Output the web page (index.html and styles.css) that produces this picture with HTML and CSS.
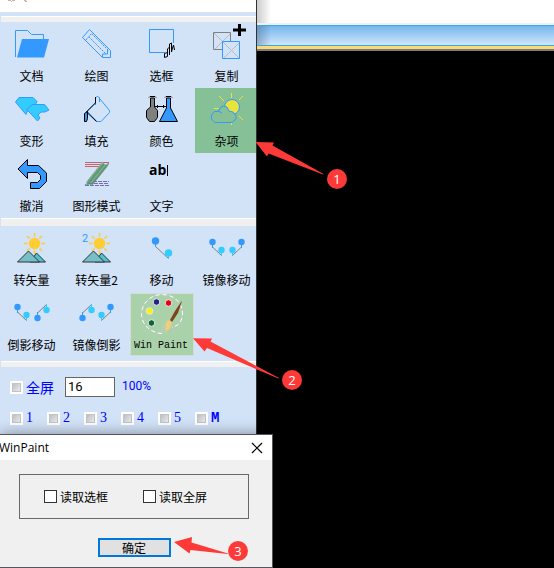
FILE: index.html
```html
<!DOCTYPE html>
<html lang="zh-CN">
<head>
    <meta charset="UTF-8">
    <meta name="viewport" content="width=device-width, initial-scale=1.0">
    <title>WinPaint</title>
    <link rel="stylesheet" href="styles.css">
</head>
<body>

    <!-- Tool panel -->
    <aside class="panel">
        <div class="panel-top">
            <svg width="40" height="4"><path d="M8 .5h3M12 .5h3M24 .5h2" stroke="#b9b4bd"/><path d="M11 1.5h1M25 1.5h2" stroke="#d8a58c"/></svg>
        </div>
        <div class="separator first"></div>

        <div class="tools">
            <button class="tool">
                <svg class="icon"><path d="M15.500 34V7.500h12l4 4h12V17" fill="none" stroke="#39f"/><path d="M22 16h27l-5 18.500H17z" fill="#39f"/></svg>
                <span>文档</span>
            </button>
            <button class="tool">
                <svg class="icon" fill="none" stroke="#39f"><path d="M17.500 14.500l7-8 21 21v7h-8z"/><path d="M21 17l6-7M24 14l17 17M27 11l17 17" stroke-dasharray="2 1"/><path d="M42.500 27v4h-5v3"/></svg>
                <span>绘图</span>
            </button>
            <button class="tool">
                <svg class="icon" fill="none"><path d="M43.500 20V6.500h-24v23H35" stroke="#39f"/><path d="M34.500 34.500v-4l3-1v4l-3 1M37.500 33v-7l2-2v8M39.500 26v-5l2-1v9l1-4 1-3 1 5" stroke="#000"/></svg>
                <span>选框</span>
            </button>
            <button class="tool">
                <svg class="icon" fill="none"><path d="M19 10l17 17M36 10L19 27M28 19l17 17M45 19L28 36" stroke="#bbb"/><path d="M27 26.500h-8.500v-17h17V18" stroke="#808080"/><path d="M27.500 18.500h17v17h-17z" stroke="#39f"/><path d="M38 7h13M44.500 1v12" stroke="#000" stroke-width="3"/></svg>
                <span>复制</span>
            </button>

            <button class="tool">
                <svg class="icon" stroke="#39f"><path d="M15.500 14l3.500-4.500h14l4 4-2 4-8 6-1 3z" fill="#3cf"/><path d="M26.500 21.500l6-5h12l4.500 5.500-4 2h-4l-3 3 2 3-2.500 3-6.500-7z" fill="#3cf"/></svg>
                <span>变形</span>
            </button>
            <button class="tool">
                <svg class="icon" fill="none"><path d="M31 14l-9 9 10 10.500h4l8.500-9v-2L35 11" stroke="#39f"/><path d="M30.500 17V9.500l2-1 2 1V14" stroke="#39f"/><path d="M19.500 33.500v-8l3-2v7l-1 3z" fill="#39f" stroke="#000"/><path d="M30.500 9v6l-9 9 10 9.500" stroke="#000"/></svg>
                <span>填充</span>
            </button>
            <button class="tool">
                <svg class="icon" stroke="#000"><path d="M20.500 10h4v9l3 3.500v7l-3 4h-5l-3-4v-7l4-3.500z" fill="#808080"/><path d="M36.500 10h4v10l7 13.500H29.500l7-13.500z" fill="#39f"/><path d="M19 9.500l1-1h5l1 1M35 9.500l1-1h5l1 1M25 18.500h11M27.500 17v3M33.500 17v3" fill="none"/></svg>
                <span>颜色</span>
            </button>
            <button class="tool misc">
                <svg class="icon"><circle cx="37" cy="19" r="7.500" fill="#ebe33c" stroke="#39f"/><path d="M36.500 5v5M48 8l-4 4M24 8l5 5M48 32l-4-4M19 20.500h5M36.500 35v2" stroke="#ebe33c"/><path d="M20 34.500l-3.500-3.500v-4l3-3.500h4l1.500-3.500 3-2 4 1 2 4 4 1 3 4v3l-4 3.500z" fill="#85c097" stroke="#39f"/><path d="M23 23l4 2" stroke="#39f"/></svg>
                <span>杂项</span>
            </button>

            <button class="tool">
                <svg class="icon"><path d="M18 16l9.500-9.500v6h11l8 7.500v8.500l-7 7h-9v-6h7l3-3v-4l-3-3H27.500v6z" fill="#39f" stroke="#000"/></svg>
                <span>撤消</span>
            </button>
            <button class="tool">
                <svg class="icon" fill="none"><path d="M20 9.500h24M20 11.500h20M20 13.500h16" stroke="#c8606a"/><path d="M40 11L24 31" stroke="#8fb49c" stroke-width="7"/><path d="M39 11L22 32M43 11L27 31" stroke="#4f9f74" stroke-width="2"/><path d="M36 12L20 32M41 12L25 32M44 10L28 30" stroke="#818a80" stroke-dasharray="2 1"/><path d="M28 28.500h16M24 30.500h20M20 32.500h24" stroke="#7770a8" stroke-dasharray="4 1"/></svg>
                <span>图形模式</span>
            </button>
            <button class="tool">
                <svg class="icon"><text class="ab" x="19" y="22">ab</text><path d="M37.500 12v11" stroke="#000"/></svg>
                <span>文字</span>
            </button>
        </div>

        <div class="separator wide"></div>

        <div class="tools vector">
            <button class="tool">
                <svg class="icon"><path d="M34.500 6v21M24 16.500h21M27 9l15 15M42 9L27 24" stroke="#fc3" stroke-width="1.500"/><circle cx="34.500" cy="16.500" r="7" fill="#d2e2f7"/><circle cx="34.500" cy="16.500" r="5.700" fill="#fc3"/><path d="M30 35l6.500-9 9 9z" fill="#4cc3cd" stroke="#333"/><path d="M17.500 35l11-11 11 11z" fill="#76bfc9" stroke="#333"/></svg>
                <span>转矢量</span>
            </button>
            <button class="tool">
                <svg class="icon"><text class="two" x="17" y="15">2</text><path d="M34.500 6v21M24 16.500h21M27 9l15 15M42 9L27 24" stroke="#fc3" stroke-width="1.500"/><circle cx="34.500" cy="16.500" r="7" fill="#d2e2f7"/><circle cx="34.500" cy="16.500" r="5.700" fill="#fc3"/><path d="M30 35l6.500-9 9 9z" fill="#4cc3cd" stroke="#333"/><path d="M17.500 35l11-11 11 11z" fill="#76bfc9" stroke="#333"/></svg>
                <span>转矢量2</span>
            </button>
            <button class="tool">
                <svg class="icon"><path d="M25.500 19.500l13 12" stroke="#808080"/><path d="M25.500 14v6" stroke="#39f"/><path d="M38.500 26v6" stroke="#3cf"/><circle cx="25.500" cy="14" r="3.700" fill="#39f"/><circle cx="38.500" cy="26" r="3.700" fill="#3cf"/></svg>
                <span>移动</span>
            </button>
            <button class="tool">
                <svg class="icon"><path d="M17.500 20l9 8.500M46.500 20l-9 8.500" stroke="#808080"/><path d="M17.500 15v6M46.500 15v6" stroke="#39f"/><path d="M26.500 23v6M37.500 23v6" stroke="#3cf"/><circle cx="17.500" cy="15" r="3.200" fill="#39f"/><circle cx="46.500" cy="15" r="3.200" fill="#39f"/><circle cx="26.500" cy="23" r="3.200" fill="#3cf"/><circle cx="37.500" cy="23" r="3.200" fill="#3cf"/></svg>
                <span>镜像移动</span>
            </button>

            <button class="tool">
                <svg class="icon"><path d="M17.500 20l9 8.500M37.500 21l9-8.500" stroke="#808080"/><path d="M17.500 15v6M37.500 26v-6" stroke="#39f"/><path d="M26.500 23v6M46.500 18v-6" stroke="#3cf"/><circle cx="17.500" cy="15" r="3.200" fill="#39f"/><circle cx="37.500" cy="26" r="3.200" fill="#39f"/><circle cx="26.500" cy="23" r="3.200" fill="#3cf"/><circle cx="46.500" cy="18" r="3.200" fill="#3cf"/></svg>
                <span>倒影移动</span>
            </button>
            <button class="tool">
                <svg class="icon"><path d="M17.500 21l9-8.500M45.500 20l-9 8.500" stroke="#808080"/><path d="M17.500 26v-6M45.500 15v6" stroke="#39f"/><path d="M26.500 18v-6M36.500 23v6" stroke="#3cf"/><circle cx="17.500" cy="26" r="3.200" fill="#39f"/><circle cx="45.500" cy="15" r="3.200" fill="#39f"/><circle cx="26.500" cy="18" r="3.200" fill="#3cf"/><circle cx="36.500" cy="23" r="3.200" fill="#3cf"/></svg>
                <span>镜像倒影</span>
            </button>
            <button class="tool paint">
                <svg class="icon"><path d="M32 40.500C20 40 11.500 31 11.500 21S20 1.500 32 1.500 52.500 10 52.500 20 47 33 42 34.500M32 40.500V35q0-2 4-2" fill="none" stroke="#c5c9cf"/><path d="M32 40.500C20 40 11.500 31 11.500 21S20 1.500 32 1.500 52.500 10 52.500 20 47 33 42 34.500" fill="none" stroke="#fff" stroke-dasharray="4 3"/><g stroke="#e4e8e4"><circle cx="26.500" cy="9" r="3.300" fill="#22228a"/><circle cx="38.500" cy="10" r="3.300" fill="#e60012"/><circle cx="19.500" cy="18" r="3.300" fill="#fff100"/><circle cx="21.500" cy="30" r="3.300" fill="#0b6637"/></g><path d="M52 8l-4 12-6 9-2-2 5-9 6-9z" fill="#7d431d"/><path d="M38 27l4 2.500-2 6-5 3.500 1-5-.500-3z" fill="#efcf7c" stroke="#e1c98c"/></svg>
                <span>Win Paint</span>
            </button>
        </div>

        <div class="separator"></div>

        <form class="settings">
            <div class="row">
                <label class="check full"><input type="checkbox"><span>全屏</span></label>
                <input class="zoom" type="text" value="16" aria-label="缩放">
                <span class="percent">100%</span>
            </div>
            <div class="row numbers">
                <label class="check"><input type="checkbox"><span>1</span></label>
                <label class="check"><input type="checkbox"><span>2</span></label>
                <label class="check"><input type="checkbox"><span>3</span></label>
                <label class="check"><input type="checkbox"><span>4</span></label>
                <label class="check"><input type="checkbox"><span>5</span></label>
                <label class="check"><input type="checkbox"><span class="letter">M</span></label>
            </div>
        </form>
    </aside>

    <!-- Drawing area -->
    <main class="canvas">
        <div class="canvas-top"></div>
        <div class="canvas-title"></div>
        <div class="canvas-strip"></div>
    </main>

    <!-- WinPaint dialog -->
    <section class="dialog" role="dialog" aria-labelledby="dialog-title">
        <header class="dialog-title">
            <h1 id="dialog-title">WinPaint</h1>
            <button class="close" aria-label="关闭"><svg width="12" height="12"><path d="M1 1l10 10M11 1L1 11" stroke="#000" stroke-width="1.200"/></svg></button>
        </header>
        <div class="dialog-body">
            <div class="options">
                <label><input type="checkbox">读取选框</label>
                <label><input type="checkbox">读取全屏</label>
            </div>
            <button class="ok">确定</button>
        </div>
    </section>

    <!-- Numbered arrows -->
    <svg class="marks" width="360" height="568" fill="#fd3a38">
        <path d="M255.500 142l18.500.500-1.500 3 51 28.500-.500.500-54.500-21-1.500 3z"/>
        <path d="M193 338.300l19 .300-1.500 3 68.500 36.500-.500.500-71.500-30.500-2.500 3.500z"/>
        <path d="M174 542l18-5-.500 5.500 36.500 11-.500.500-37-4-1 3.500z"/>
        <circle cx="337" cy="179" r="10"/>
        <circle cx="292" cy="380" r="10"/>
        <circle cx="238" cy="551" r="10"/>
        <g class="mark-text">
            <text x="337" y="184">1</text>
            <text x="292" y="385">2</text>
            <text x="238" y="556">3</text>
        </g>
    </svg>

</body>
</html>
```

FILE: styles.css
```css
/* General Styles */
* {
    margin: 0;
    padding: 0;
    box-sizing: border-box;
}

body {
    display: flex;
    min-height: 100vh;
    position: relative;
    overflow: hidden;
    background-color: #000;
    font-family: "Liberation Sans", "Noto Sans CJK SC", sans-serif;
    font-size: 12px;
    color: #000;
}

button,
input {
    font: inherit;
}

/* Tool panel */
.panel {
    flex: none;
    width: 257px;
    overflow: hidden;
    background-color: #d2e2f7;
    border-right: 1px solid #333;
}

.panel-top {
    height: 16px;
    background-color: #fff;
    border-bottom: 4px solid #d2e2f7;
}

.panel-top svg {
    display: block;
}

.separator {
    height: 6px;
    margin-left: 1px;
    background-color: #f0f0f0;
    border-top: 1px solid #fff;
}

.separator.wide {
    height: 8px;
}

.tools {
    display: grid;
    grid-template-columns: repeat(4, 65px);
    grid-auto-rows: 65px;
    padding-top: 1px;
}

.vector {
    padding-bottom: 4px;
}

.tool {
    display: flex;
    flex-direction: column;
    align-items: center;
    border: none;
    background: none;
    font-family: "Noto Sans CJK SC", sans-serif;
    line-height: 18px;
    white-space: nowrap;
}

.tool span {
    margin-right: 2px;
}

.icon {
    display: block;
    flex: none;
    width: 65px;
    height: 44px;
}

.misc {
    background-color: #85c097;
}

.paint {
    margin: 1px 1px 1px 0;
    background-color: #aad2aa;
    border: 1px solid #d5dcd2;
    font-family: "Liberation Mono", monospace;
    font-size: 10px;
}

.paint .icon {
    margin-top: -1px;
}

.ab {
    font: bold 14px "Open Sans", sans-serif;
}

.two {
    font: 11px Roboto, sans-serif;
    fill: #39f;
}

/* Settings */
.settings {
    padding: 10px;
    color: #00f;
}

.row {
    display: flex;
    align-items: center;
    height: 20px;
}

.numbers {
    margin-top: 11px;
}

.check {
    display: flex;
    align-items: center;
    gap: 3px;
    width: 37px;
    font-family: "Liberation Serif", serif;
    font-size: 14px;
    line-height: 16px;
}

.full {
    width: 55px;
    font-family: "Noto Sans CJK SC", sans-serif;
}

.letter {
    font-family: "Liberation Mono", monospace;
    font-weight: bold;
}

.check input {
    appearance: none;
    flex: none;
    width: 13px;
    height: 13px;
    background: linear-gradient(135deg, #b4b9c0, #f2f2f2);
    border: 2px solid #fff;
    box-shadow: inset 0 0 0 1px #c3c3c3;
}

.zoom {
    width: 50px;
    height: 20px;
    padding: 0 2px 2px;
    border: 1px solid #646464;
    background-color: #fff;
    font-family: Roboto, sans-serif;
    font-size: 13px;
}

.percent {
    margin: 0 0 2px 7px;
    font-family: Roboto, sans-serif;
}

/* Drawing area */
.canvas {
    flex: 1;
    background-color: #000;
}

.canvas-top {
    height: 25px;
    background: linear-gradient(90deg, #ccc, #fff 14px);
    border-bottom: 2px solid #f0f0f0;
}

.canvas-title {
    height: 21px;
    background: linear-gradient(90deg, rgba(60, 90, 120, 0.4), transparent 14px), linear-gradient(#76b6ee, #cfe6fb);
    border-top: 1px solid #3ca5e6;
    border-bottom: 1px solid #3ca5e6;
}

.canvas-strip {
    height: 5px;
    background-color: #fbd975;
    border-bottom: 2px solid #7d7d7d;
}

/* Dialog */
.dialog {
    position: absolute;
    top: 434px;
    left: 0;
    width: 273px;
    background-color: #f0f0f0;
    border: 1px solid #55555f;
    border-left: none;
    box-shadow: 0 0 14px rgba(0, 0, 0, 0.4);
}

.dialog-title {
    display: flex;
    justify-content: space-between;
    align-items: center;
    height: 25px;
    padding-right: 9px;
    background-color: #fff;
}

.dialog-title h1 {
    margin-left: -1px;
    font: 12px "Open Sans", sans-serif;
}

.close {
    border: none;
    background: none;
}

.close svg {
    display: block;
}

.dialog-body {
    display: flex;
    flex-direction: column;
    align-items: center;
    padding: 14px 23px 10px 19px;
    font-family: "Noto Sans CJK SC", sans-serif;
}

.options {
    display: flex;
    align-items: center;
    align-self: stretch;
    gap: 35px;
    height: 45px;
    padding-left: 24px;
    border: 1px solid #696969;
}

.options label {
    display: flex;
    align-items: center;
    gap: 3px;
    line-height: 18px;
}

.options input {
    appearance: none;
    width: 13px;
    height: 13px;
    background-color: #fff;
    border: 1px solid #333;
}

.ok {
    width: 73px;
    height: 19px;
    margin-top: 19px;
    border: 2px solid #0078d7;
    background-color: #e1e1e1;
    line-height: 14px;
}

/* Numbered arrows */
.marks {
    position: absolute;
    top: 0;
    left: 0;
    pointer-events: none;
}

.mark-text {
    font: 13px "Open Sans", sans-serif;
    fill: #fff;
    text-anchor: middle;
}
```
